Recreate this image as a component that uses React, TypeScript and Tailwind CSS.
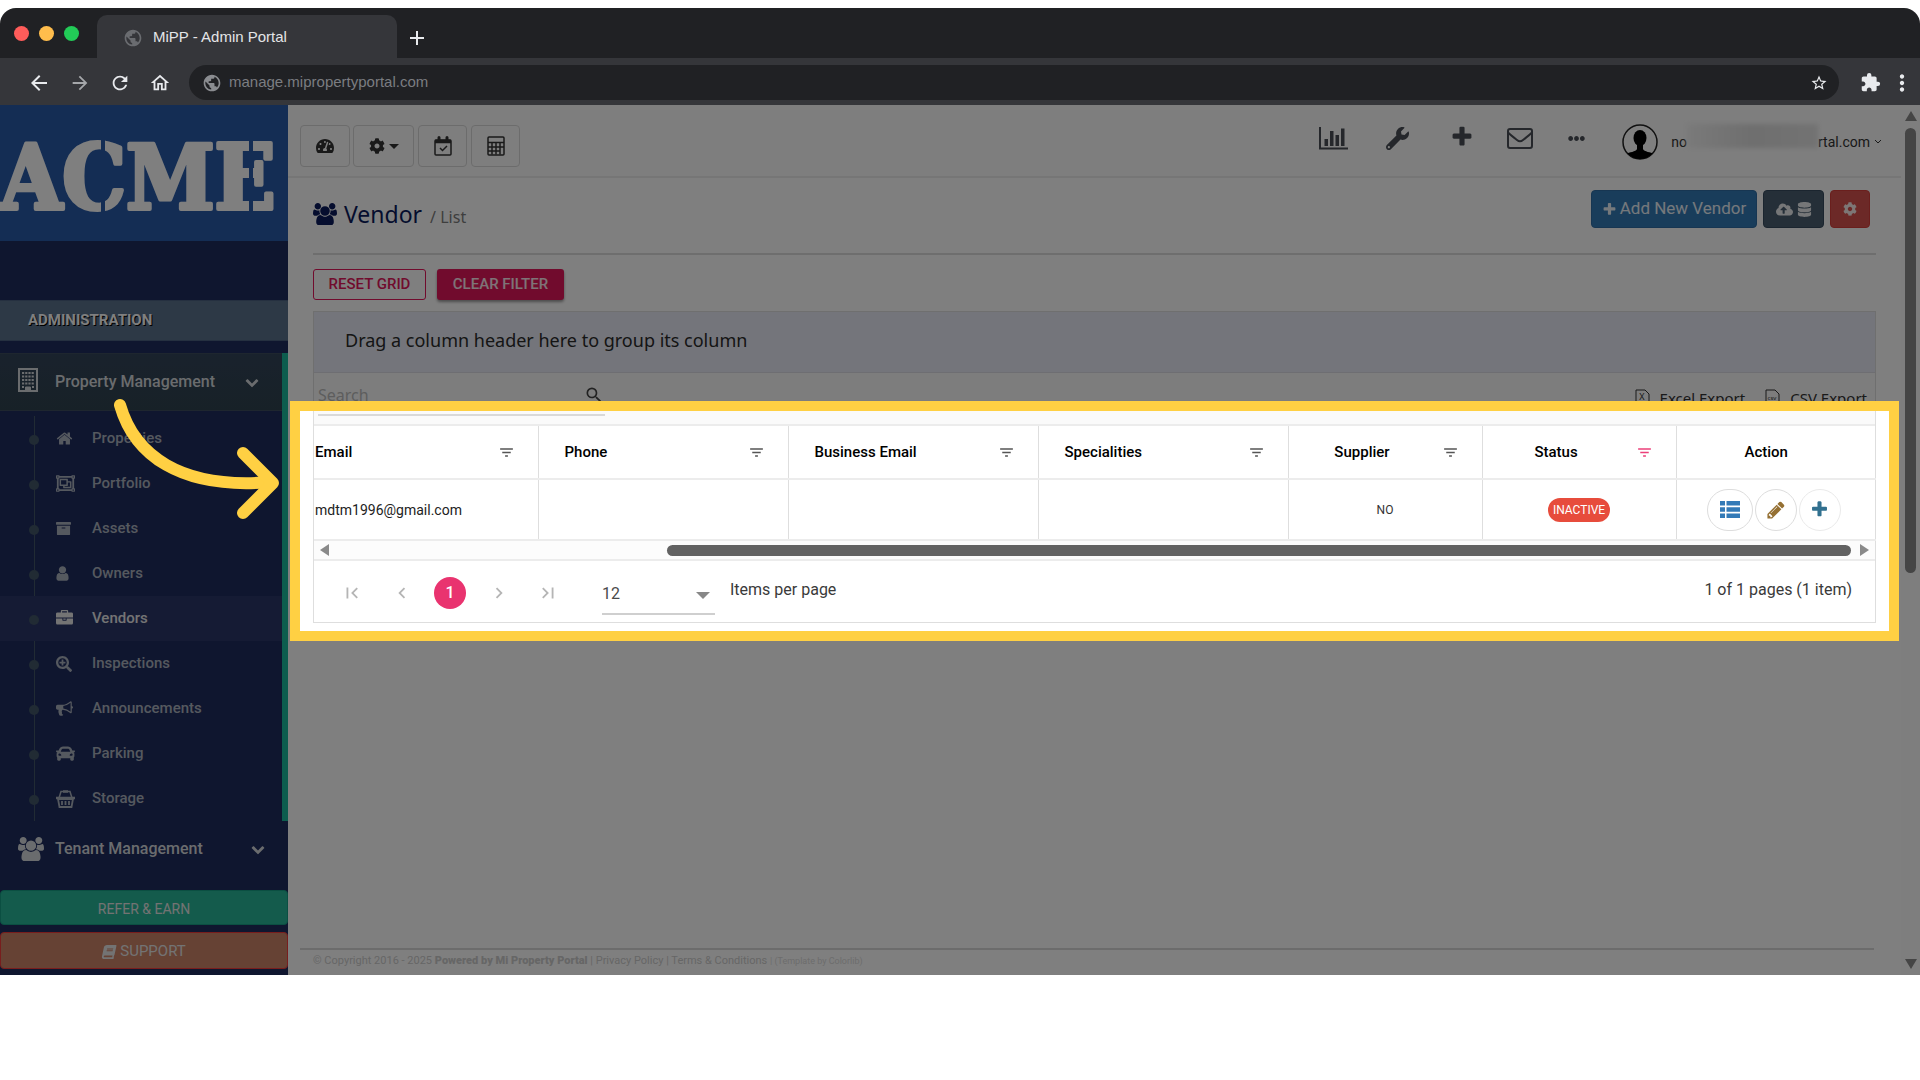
import type { ReactNode } from "react";
import clsx from "clsx";
import {
  FaArchive,
  FaBook,
  FaCar,
  FaCloudUploadAlt,
  FaCog,
  FaDatabase,
  FaEllipsisH,
  FaRegObjectGroup,
  FaSearchPlus,
  FaTachometerAlt,
  FaWrench,
} from "react-icons/fa";
import {
  MdAdd,
  MdArrowBack,
  MdArrowForward,
  MdChevronLeft,
  MdChevronRight,
  MdExtension,
  MdFilterList,
  MdFirstPage,
  MdLastPage,
  MdMoreVert,
  MdOutlineHome,
  MdPublic,
  MdRefresh,
  MdSearch,
  MdStarBorder,
} from "react-icons/md";

interface IconProps {
  className?: string;
}

// Font Awesome 4 outlines, 1792 unit grid
const glyphs = {
  plus: "M1600 736v192q0 40-28 68t-68 28h-416v416q0 40-28 68t-68 28h-192q-40 0-68-28t-28-68v-416h-416q-40 0-68-28t-28-68v-192q0-40 28-68t68-28h416v-416q0-40 28-68t68-28h192q40 0 68 28t28 68v416h416q40 0 68 28t28 68z",
  home: "M1472 992v480q0 26-19 45t-45 19h-384v-384h-256v384h-384q-26 0-45-19t-19-45v-480q0-1 .5-3t.5-3l575-474 575 474q1 2 1 6zm223-69l-62 74q-8 9-21 11h-3q-13 0-21-7l-692-577-692 577q-12 8-24 7-13-2-21-11l-62-74q-8-10-7-23.5t11-21.5l719-599q32-26 76-26t76 26l244 204v-195q0-14 9-23t23-9h192q14 0 23 9t9 23v408l219 182q10 8 11 21.5t-7 23.5z",
  user: "M1536 1399q0 109-62.5 187t-150.5 78h-854q-88 0-150.5-78t-62.5-187q0-85 8.5-160.5t31.5-152 58.5-131 94-89 134.5-34.5q131 128 313 128t313-128q76 0 134.5 34.5t94 89 58.5 131 31.5 152 8.5 160.5zm-256-887q0 159-112.5 271.5t-271.5 112.5-271.5-112.5-112.5-271.5 112.5-271.5 271.5-112.5 271.5 112.5 112.5 271.5z",
  briefcase: "M640 256h512v-128h-512v128zm1152 640v480q0 66-47 113t-113 47h-1472q-66 0-113-47t-47-113v-480h672v160q0 26 19 45t45 19h320q26 0 45-19t19-45v-160h672zm-768 0v128h-256v-128h256zm768-480v384h-1792v-384q0-66 47-113t113-47h352v-160q0-40 28-68t68-28h576q40 0 68 28t28 68v160h352q66 0 113 47t47 113z",
  bullhorn: "M1664 640q53 0 90.5 37.5t37.500 90.5-37.500 90.5-90.500 37.500v384q0 52-38 90t-90 38q-417-347-812-380-58 19-91 66t-31 100.500 40 92.500q-20 33-23 65.500t6 58 33.500 55 48 50 61.500 50.500q-29 58-111.500 83t-168.500 11.500-132-55.500q-7-23-29.500-87.500t-32-94.500-23-89-15-101 3.500-98.500 22-110.500h-122q-66 0-113-47t-47-113v-192q0-66 47-113t113-47h480q435 0 896-384 52 0 90 38t38 90v384zm-128 604v-954q-394 302-768 343v270q377 42 768 341z",
  chevronDown: "M1683 808l-742 741q-19 19-45 19t-45-19l-742-741q-19-19-19-45.500t19-45.500l166-165q19-19 45-19t45 19l531 531 531-531q19-19 45-19t45 19l166 165q19 19 19 45.500t-19 45.500z",
  pencil: "M491 1536l91-91-235-235-91 91v107h128v128h107zm523-928q0-22-22-22-10 0-17 7l-542 542q-7 7-7 17 0 22 22 22 10 0 17-7l542-542q7-7 7-17zm-54-192l416 416-832 832h-416v-416zm683 96q0 53-37 90l-166 166-416-416 166-165q36-38 90-38 53 0 91 38l235 234q37 39 37 91z",
};

function Glyph({ name, className }: { name: keyof typeof glyphs; className?: string }) {
  return (
    <svg className={className} viewBox="0 0 1792 1792" fill="currentColor">
      <path d={glyphs[name]} />
    </svg>
  );
}

const menuItems: { label: string; icon: ReactNode; active?: boolean }[] = [
  { label: "Properties", icon: <Glyph name="home" className="size-[17px]" /> },
  { label: "Portfolio", icon: <FaRegObjectGroup size={19} /> },
  { label: "Assets", icon: <FaArchive size={15} /> },
  { label: "Owners", icon: <Glyph name="user" className="-ml-[2px] size-[17px]" /> },
  { label: "Vendors", icon: <Glyph name="briefcase" className="size-[17px]" />, active: true },
  { label: "Inspections", icon: <FaSearchPlus size={16} /> },
  { label: "Announcements", icon: <Glyph name="bullhorn" className="size-[17px]" /> },
  { label: "Parking", icon: <FaCar size={19} /> },
  { label: "Storage", icon: <BasketIcon /> },
];

export default function App() {
  return (
    <div
      className="flex min-h-screen flex-col bg-white pt-2 pb-[105px]"
      style={{ fontFamily: 'Roboto, "Liberation Sans", sans-serif' }}
    >
      <div className="relative flex flex-1 flex-col overflow-hidden rounded-t-2xl">
        <BrowserChrome />
        <div className="relative flex flex-1 overflow-hidden">
          <Sidebar />
          <main className="flex min-w-0 flex-1 flex-col bg-white">
            <TopNav />
            <VendorPage />
            <Footer />
          </main>
          <PageScrollbar />
          {/* Spotlight: everything outside the frame is dimmed by its shadow */}
          <div className="pointer-events-none absolute top-[296px] right-[21px] left-[290px] h-[240px] border-10 border-[#ffd043] shadow-[0_0_0_3000px_rgba(0,0,0,0.5)]" />
          <svg
            className="pointer-events-none absolute top-[288px] left-[108px]"
            width="180"
            height="132"
            fill="none"
            stroke="#ffd043"
            strokeWidth="12"
            strokeLinecap="round"
            strokeLinejoin="round"
          >
            <path d="M12 12 C26 61 71 97 163 89" />
            <path d="M135 60 L165 90 L135 120" />
          </svg>
        </div>
      </div>
    </div>
  );
}

function BrowserChrome() {
  return (
    <header style={{ fontFamily: '"Liberation Sans", Arial, sans-serif' }}>
      <div className="flex h-[50px] items-end bg-[#202124] pl-[14px]">
        <div className="flex items-center gap-[10px] self-center">
          <span className="size-[15px] rounded-full bg-[#ff5c5a]" />
          <span className="size-[15px] rounded-full bg-[#ffbd4c]" />
          <span className="size-[15px] rounded-full bg-[#22cb57]" />
        </div>
        <div className="ml-[18px] flex h-[43px] w-[300px] items-center gap-[10px] rounded-t-[10px] bg-[#35363a] pt-[2px] pl-[26px] text-[15px] text-[#e4e5e7]">
          <MdPublic size={20} className="text-[#6a6c70]" />
          MiPP - Admin Portal
        </div>
        <button aria-label="New tab" className="mb-2 ml-2 text-[#e8eaed]">
          <MdAdd size={24} />
        </button>
      </div>
      <div className="flex h-[47px] items-center bg-[#35363a] pt-[2px] text-[#e8eaed]">
        <div className="flex items-center gap-[18px] pl-[27px]">
          <button aria-label="Back"><MdArrowBack size={24} /></button>
          <button aria-label="Forward" className="text-[#a5a7aa]"><MdArrowForward size={22} /></button>
          <button aria-label="Reload"><MdRefresh size={22} /></button>
          <button aria-label="Home"><MdOutlineHome size={22} /></button>
        </div>
        <div className="ml-[18px] flex h-[35px] flex-1 items-center gap-[7px] rounded-full bg-[#202124] pr-[11px] pl-[13px]">
          <MdPublic size={20} className="text-[#8a8c90]" />
          <input
            aria-label="Address"
            className="flex-1 bg-transparent text-[15px] text-[#7b7d81] outline-none"
            defaultValue="manage.mipropertyportal.com"
          />
          <button aria-label="Bookmark"><MdStarBorder size={18} /></button>
        </div>
        <button aria-label="Extensions" className="ml-[21px]"><MdExtension size={21} /></button>
        <button aria-label="More" className="mr-[5px] ml-[8px]"><MdMoreVert size={26} /></button>
      </div>
    </header>
  );
}

function Sidebar() {
  return (
    <aside className="flex w-[288px] shrink-0 flex-col bg-[#1f2d5e]">
      <AcmeLogo />
      <h3 className="mt-[59px] border-y border-[#4b6180] bg-[#5b728c] pl-7 text-[15px] leading-[39px] font-bold text-white [text-shadow:1px_1px_#000]">
        ADMINISTRATION
      </h3>
      <div className="mt-3 border-r-6 border-[#1abb9c]">
        <a href="#property" className="flex h-[58px] items-center border-y border-[#3d4c5e] bg-linear-to-b from-[#33445a] to-[#2f434f] pl-[18px] text-base font-medium text-[#d5d8dc]">
          <BuildingIcon className="mb-1 w-[37px] shrink-0" />
          <span className="flex-1">Property Management</span>
          <Glyph name="chevronDown" className="mr-[23px] size-[14px]" />
        </a>
        <ul className="relative mt-[5px] before:absolute before:inset-y-0 before:left-[34px] before:w-px before:bg-[#425668] before:content-['']">
          {menuItems.map((item) => (
            <li key={item.label}>
              <a
                href="#menu"
                className={clsx(
                  "relative flex h-[45px] items-center pl-[29px] text-[15px] font-medium",
                  item.active ? "bg-[#2a3768] text-[#e8e8e8]" : "text-[#abb2bf]",
                )}
              >
                <span className="mt-[3px] size-[10px] rounded-full bg-[#425668]" />
                <span className="ml-[17px] w-[36px]">{item.icon}</span>
                {item.label}
              </a>
            </li>
          ))}
        </ul>
      </div>
      <a href="#tenant" className="mt-[3px] flex h-[50px] items-center pl-[18px] text-base font-medium text-[#d5d8dc]">
        <UsersIcon className="w-[26px]" />
        <span className="ml-[11px] flex-1">Tenant Management</span>
        <Glyph name="chevronDown" className="mr-[23px] size-[14px]" />
      </a>
      <div className="mt-auto flex flex-col gap-[7px] pb-[6px] text-[#e6e6e6]">
        <button className="h-[35px] rounded border border-[#169f85] bg-[#29b699] pt-[2px] text-sm">REFER &amp; EARN</button>
        <button className="flex h-[37px] items-center justify-center gap-1 rounded border border-[#f03a3a] bg-[#cc8469] pt-[2px] text-[15px]">
          <FaBook size={14} className="-skew-x-12" />
          SUPPORT
        </button>
      </div>
    </aside>
  );
}

function AcmeLogo() {
  return (
    <svg className="h-[136px] w-full bg-[#285aa8]" viewBox="0 0 288 136" role="img" aria-label="ACME">
      <text
        x="0"
        y="104"
        fill="#fff"
        stroke="#fff"
        strokeWidth="4"
        strokeLinejoin="round"
        fontSize="89"
        fontWeight="700"
        fontFamily='"DejaVu Serif Condensed", "DejaVu Serif", serif'
      >
        ACME
      </text>
      {/* stencil cuts */}
      <g fill="#285aa8">
        <rect x="101" y="28" width="4" height="84" />
        <rect x="249" y="28" width="4" height="84" />
      </g>
    </svg>
  );
}

function TopNav() {
  const box = "flex h-[42px] items-center justify-center rounded border border-[#d8d8d8] text-[#333]";
  return (
    <nav className="flex h-[73px] shrink-0 items-start justify-between border-b-2 border-[#ededed] bg-[#fcfcfc] pt-5 pr-[19px] pl-3">
      <div className="flex">
        <button aria-label="Dashboard" className={clsx(box, "w-[50px]")}><FaTachometerAlt size={18} /></button>
        <button aria-label="Settings" className={clsx(box, "ml-[3px] w-[61px] gap-1")}>
          <FaCog size={16} />
          <span className="border-x-5 border-t-5 border-x-transparent border-t-[#333]" />
        </button>
        <button aria-label="Calendar" className={clsx(box, "ml-1 w-[49px]")}><CalendarIcon /></button>
        <button aria-label="Calculator" className={clsx(box, "ml-1 w-[49px]")}><CalculatorIcon /></button>
      </div>
      <div className="-mt-px flex items-center text-[#4a4f57]">
        <button aria-label="Reports" className="mb-2 w-[67px]"><BarChartIcon /></button>
        <button aria-label="Maintenance" className="mb-2 w-[64px]"><FaWrench size={23} /></button>
        <button aria-label="Add" className="mb-[10px] w-[57px]"><Glyph name="plus" className="size-[24px]" /></button>
        <button aria-label="Messages" className="mb-2 w-[61px]"><EnvelopeIcon /></button>
        <button aria-label="More" className="mb-2 w-[54px]"><FaEllipsisH size={17} /></button>
        <button className="flex items-center text-[14px] text-[#333]">
          <AvatarIcon />
          <span className="ml-[13px]">no</span>
          <span className="mb-3 h-6 w-[131px] bg-linear-to-r from-[#f4f4f4] via-[#dedede] to-[#e6e6e6] blur-[2px]" />
          <span>rtal.com</span>
          <svg className="ml-1" width="8" height="6" fill="none" stroke="currentColor">
            <path d="M1 1l3 3 3-3" />
          </svg>
        </button>
      </div>
    </nav>
  );
}

function VendorPage() {
  return (
    <section className="flex-1 pr-[25px] pl-[25px]">
      <div className="flex h-[77px] items-start justify-between border-b-2 border-[#dcdcdc] pt-3 pr-[6px]">
        <h1
          className="flex items-baseline pt-2 text-[23px] leading-8 text-[#0a1a5c]"
          style={{ fontFamily: '"Noto Sans", "Open Sans", sans-serif' }}
        >
          <UsersIcon className="mr-[7px] w-[24px] self-center" />
          Vendor
          <small className="ml-2 text-base text-[#7d7d7d]">/ List</small>
        </h1>
        <div className="flex gap-[6px] text-white/90">
          <button className="flex h-[38px] w-[166px] items-center justify-center gap-[3px] rounded border border-[#2e6da4] bg-[#337ab7] text-[17px]">
            <Glyph name="plus" className="size-[15px]" />
            Add New Vendor
          </button>
          <button aria-label="Import" className="flex h-[38px] w-[61px] items-center justify-center gap-1 rounded border border-[#364b5f] bg-[#4b5f71]">
            <FaCloudUploadAlt size={17} />
            <FaDatabase size={15} />
          </button>
          <button aria-label="Options" className="flex h-[38px] w-10 items-center justify-center rounded border border-[#d43f3a] bg-[#d9534f]">
            <FaCog size={14} />
          </button>
        </div>
      </div>
      <div className="flex gap-[11px] pt-[14px] text-[15px] font-medium">
        <button className="h-[31px] w-[113px] rounded-[3px] border border-[#e3165b] text-[#e3165b]">RESET GRID</button>
        <button className="h-[31px] w-[127px] rounded-[3px] bg-[#e3165b] text-white/90 shadow-[0_2px_3px_rgba(0,0,0,0.4)]">
          CLEAR FILTER
        </button>
      </div>
      <VendorGrid />
    </section>
  );
}

function VendorGrid() {
  return (
    <div className="mt-[11px] border border-[#dedede]">
      <div
        className="h-[61px] border-b border-[#dcdce4] bg-[#e8eaf6] pl-[31px] text-lg leading-[56px] text-[#2b2b2b]"
        style={{ fontFamily: '"Noto Sans", "Open Sans", sans-serif' }}
      >
        Drag a column header here to group its column
      </div>
      <div className="flex h-[53px] items-start justify-between border-b-2 border-[#ececec] bg-[#fafafa] pr-2 pl-1" style={{ fontFamily: '"Noto Sans", "Open Sans", sans-serif' }}>
        <label className="mt-[7px] flex h-[36px] w-[287px] items-center border-b-2 border-[#d9d9d9]">
          <input placeholder="Search" aria-label="Search" className="mb-1 min-w-0 flex-1 bg-transparent text-base outline-none placeholder:text-[#bbb]" />
          <MdSearch size={20} className="mr-px mb-1 text-[#444]" />
        </label>
        <div className="flex gap-5 pt-[14px] text-[15px] text-[#333]">
          <button className="flex items-center gap-[10px]"><FileIcon label="X" />Excel Export</button>
          <button className="flex items-center gap-[10px]"><FileIcon label="csv" />CSV Export</button>
        </div>
      </div>
      <table className="w-full table-fixed border-collapse text-[15px]">
        <colgroup>
          <col className="w-[224px]" />
          <col className="w-[250px]" />
          <col className="w-[250px]" />
          <col className="w-[250px]" />
          <col className="w-[194px]" />
          <col className="w-[194px]" />
          <col className="w-[200px]" />
        </colgroup>
        <thead>
          <tr className="h-[53px] border-b-2 border-[#ececec] text-black">
            <HeadCell label="Email" className="pl-px" />
            <HeadCell label="Phone" className="pl-[26px]" />
            <HeadCell label="Business Email" className="pl-[26px]" />
            <HeadCell label="Specialities" className="pl-[26px]" />
            <HeadCell label="Supplier" center />
            <HeadCell label="Status" center active />
            <th className="pr-5 font-medium">Action</th>
          </tr>
        </thead>
        <tbody>
          <tr className="h-[61px] border-b-2 border-[#ececec] text-[#222]">
            <td className="border-r border-[#dedede] pl-px text-sm">mdtm1996@gmail.com</td>
            <td className="border-r border-[#dedede]" />
            <td className="border-r border-[#dedede]" />
            <td className="border-r border-[#dedede]" />
            <td className="border-r border-[#dedede] text-center text-[12px] text-[#333]">NO</td>
            <td className="border-r border-[#dedede] text-center">
              <span className="inline-block h-6 rounded-full bg-[#e74c3c] px-[5px] align-middle text-[12px] leading-6 text-white">
                INACTIVE
              </span>
            </td>
            <td>
              <div className="flex justify-center gap-[2px] pr-[5px]">
                <button aria-label="Details" className="flex h-[42px] w-[46px] items-center justify-center rounded-full border border-[#ddd] text-[#337ab7]">
                  <ListIcon />
                </button>
                <button aria-label="Edit" className="flex size-[42px] items-center justify-center rounded-full border border-[#ddd] text-[#957033]">
                  <Glyph name="pencil" className="size-[20px]" />
                </button>
                <button aria-label="Add" className="flex size-[42px] items-center justify-center rounded-full border border-[#eaeaea] text-[#31708f]">
                  <Glyph name="plus" className="size-[19px]" />
                </button>
              </div>
            </td>
          </tr>
        </tbody>
      </table>
      <div className="flex h-5 items-center border-b-2 border-[#ececec] bg-[#fcfcfc] pr-[6px] pl-[6px]">
        <span className="border-y-6 border-r-9 border-y-transparent border-r-[#8a8a8a]" />
        <div className="flex flex-1 justify-end pr-[9px]">
          <div className="h-[11px] w-7/9 rounded-full bg-[#626262]" />
        </div>
        <span className="border-y-6 border-l-9 border-y-transparent border-l-[#8a8a8a]" />
      </div>
      <Pager />
    </div>
  );
}

function HeadCell({ label, className, center, active }: { label: string; className?: string; center?: boolean; active?: boolean }) {
  return (
    <th className={clsx("border-r border-[#dedede] text-left font-medium", className)}>
      <div className="flex items-center pr-[23px]">
        <span className={clsx("flex-1", center && "pr-[6px] text-center")}>{label}</span>
        <button aria-label={`Filter ${label}`} className={active ? "text-[#ec407a]" : "text-[#555]"}>
          <MdFilterList size={17} />
        </button>
      </div>
    </th>
  );
}

function Pager() {
  return (
    <div className="flex h-[61px] items-center text-base text-[#3a3a3a]">
      <div className="flex items-center pt-[2px] pl-[27px] text-[#b5b5b5]">
        <button aria-label="First page"><MdFirstPage size={22} /></button>
        <button aria-label="Previous page" className="ml-7"><MdChevronLeft size={22} /></button>
        <button className="ml-[21px] size-8 rounded-full bg-[#e9336f] font-medium text-white">1</button>
        <button aria-label="Next page" className="ml-[22px]"><MdChevronRight size={22} /></button>
        <button aria-label="Last page" className="ml-[27px]"><MdLastPage size={22} /></button>
      </div>
      <div className="relative ml-[43px] w-[113px] pt-[6px]">
        <select aria-label="Items per page" className="h-[41px] w-full appearance-none border-b-2 border-[#cfcfcf] bg-transparent text-[#4a4a4a]">
          <option>12</option>
        </select>
        <span className="pointer-events-none absolute top-6 right-[5px] border-x-7 border-t-7 border-x-transparent border-t-[#888]" />
      </div>
      <span className="mb-1 ml-[15px]">Items per page</span>
      <span className="mr-[23px] mb-1 ml-auto">1 of 1 pages (1 item)</span>
    </div>
  );
}

function Footer() {
  return (
    <footer className="mr-[27px] ml-3 border-t-2 border-[#d8d8d8] pt-1 pb-[7px] pl-[13px] text-[11px] leading-[13px] text-[#cdcdcd]">
      © Copyright 2016 - 2025 <b className="font-black">Powered by Mi Property Portal</b> |{" "}
      <a href="#privacy">Privacy Policy</a> | <a href="#terms">Terms &amp; Conditions</a>{" "}
      <span className="text-[9px] text-[#dadada]">| (Template by <a href="#colorlib">Colorlib</a>)</span>
    </footer>
  );
}

function PageScrollbar() {
  return (
    <div className="flex w-[19px] shrink-0 flex-col items-center bg-[#fcfcfc] py-[6px]">
      <span className="border-x-6 border-b-10 border-x-transparent border-b-[#8a8a8a]" />
      <div className="my-[7px] w-[11px] flex-1">
        <div className="h-[54%] rounded-full bg-[#8a8a8a]" />
      </div>
      <span className="border-x-6 border-t-10 border-x-transparent border-t-[#8a8a8a]" />
    </div>
  );
}

function UsersIcon({ className }: IconProps) {
  return (
    <svg className={className} viewBox="64 0 1920 1792" fill="currentColor">
      <path d="M657 896q-162 5-265 128h-134q-82 0-138-40.5t-56-118.5q0-353 124-353 6 0 43.5 21t97.5 42.5 119 21.5q67 0 133-23-5 37-5 66 0 139 81 256zm1071 637q0 120-73 189.5t-194 69.5h-874q-121 0-194-69.5t-73-189.5q0-53 3.5-103.5t14-109 26.5-108.5 43-97.5 62-81 85.5-53.5 111.5-20q10 0 43 21.5t73 48 107 48 135 21.5 135-21.5 107-48 73-48 43-21.5q61 0 111.5 20t85.5 53.5 62 81 43 97.5 26.5 108.5 14 109 3.5 103.5zm-1024-1277q0 106-75 181t-181 75-181-75-75-181 75-181 181-75 181 75 75 181zm704 384q0 159-112.5 271.5t-271.5 112.5-271.5-112.5-112.5-271.5 112.5-271.5 271.5-112.5 271.5 112.5 112.5 271.5zm576 225q0 78-56 118.5t-138 40.5h-134q-103-123-265-128 81-117 81-256 0-29-5-66 66 23 133 23 59 0 119-21.5t97.5-42.5 43.5-21q124 0 124 353zm-128-609q0 106-75 181t-181 75-181-75-75-181 75-181 181-75 181 75 75 181z" />
    </svg>
  );
}

function BasketIcon() {
  return (
    <svg width="19" height="18" viewBox="0 0 19 18" fill="none" stroke="currentColor">
      <path d="M3 8l2-6.500h9L16 8" strokeWidth="1.500" />
      <path d="M7 1.500h5" strokeWidth="2.500" />
      <path d="M.5 8h18" strokeWidth="2.500" strokeLinecap="round" />
      <path d="M2 9h15l-1.500 8h-12zM6 11v4M9.500 11v4M13 11v4" strokeWidth="1.800" />
    </svg>
  );
}

function BuildingIcon({ className }: IconProps) {
  return (
    <span className={className}>
      <svg width="20" height="24" viewBox="0 0 20 24" fill="none" stroke="currentColor">
        <rect x="1" y="1" width="18" height="22" strokeWidth="2" />
        <path d="M4 5h12M4 8.500h12M4 12h12M4 15.500h12" strokeWidth="2.200" strokeDasharray="2.200 1" />
        <path d="M4 19h2M14 19h2" strokeWidth="2" />
        <path d="M7.500 23v-4h5v4z" fill="currentColor" />
      </svg>
    </span>
  );
}

function CalendarIcon() {
  return (
    <svg width="18" height="20" viewBox="0 0 18 20" fill="none" stroke="currentColor">
      <rect x="1" y="4" width="16" height="15" rx="1" strokeWidth="1.500" />
      <path d="M1 5.500h16" strokeWidth="3.500" />
      <path d="M5 1.500v3M13 1.500v3" strokeWidth="3" strokeLinecap="round" />
      <path d="M6 12l2.500 2.500L13 10" strokeWidth="1.500" />
    </svg>
  );
}

function CalculatorIcon() {
  return (
    <svg width="18" height="20" viewBox="0 0 18 20" fill="none" stroke="currentColor">
      <rect x="1" y="1" width="16" height="18" rx="1" strokeWidth="1.500" />
      <path d="M1 6.500h16M1 11h16M1 15h12" strokeWidth="1.500" />
      <path d="M5 6.500v12M9 6.500v12M13 6.500v12" strokeWidth="1.500" />
    </svg>
  );
}

function BarChartIcon() {
  return (
    <svg width="29" height="23" viewBox="0 0 29 23" fill="currentColor">
      <path d="M0 0h2v20.500h27v2H0z" />
      <path d="M5.500 12h3.500v7H5.500zM11 4h3.500v15H11zM16.500 8h3.500v11h-3.500zM22 1.500h3.500V19H22z" />
    </svg>
  );
}

function EnvelopeIcon() {
  return (
    <svg width="26" height="21" viewBox="0 0 26 21" fill="none" stroke="currentColor" strokeWidth="2">
      <rect x="1" y="1" width="24" height="19" rx="2" />
      <path d="M1 4.500c3 3 6 5 9 7.500 2 1.700 4 1.700 6 0 3-2.500 6-4.500 9-7.500" />
    </svg>
  );
}

function ListIcon() {
  return (
    <svg width="20" height="17" viewBox="0 0 20 17" fill="currentColor">
      <path d="M0 0h5v4.500H0zM6.500 0H20v4.500H6.500zM0 6.200h5v4.500H0zM6.500 6.200H20v4.500H6.500zM0 12.400h5v4.500H0zM6.500 12.400H20v4.500H6.500z" />
    </svg>
  );
}

function FileIcon({ label }: { label: string }) {
  return (
    <svg width="15" height="18" viewBox="0 0 15 18" fill="none" stroke="currentColor">
      <path d="M1 1h9l4 4v12H1z" />
      <text x="7" y="11" fill="currentColor" stroke="none" fontSize={label.length > 1 ? 6 : 9} textAnchor="middle">
        {label}
      </text>
    </svg>
  );
}

function AvatarIcon() {
  return (
    <svg width="36" height="36" viewBox="0 0 36 36">
      <clipPath id="avatar">
        <circle cx="18" cy="18" r="17" />
      </clipPath>
      <circle cx="18" cy="18" r="17" fill="#fff" stroke="#222" strokeWidth="1.500" />
      <g clipPath="url(#avatar)" fill="#000">
        <ellipse cx="18" cy="14" rx="6.500" ry="8" />
        <path d="M15 19h6v6c1 3 8 3 11 5v8H4v-8c3-2 10-2 11-5z" />
      </g>
    </svg>
  );
}
